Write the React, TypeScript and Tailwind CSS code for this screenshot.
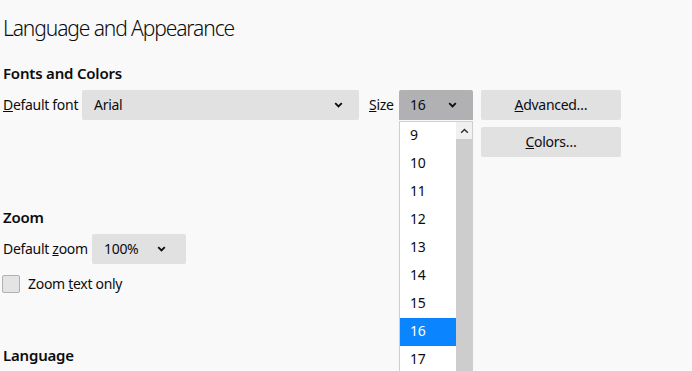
import React from "react";

const Chevron = () => (
  <svg width="9" height="6" viewBox="0 0 9 6">
    <path d="M1.2 1.2 L4.5 4.5 L7.8 1.2" stroke="#0c0c0d" strokeWidth="1.8" fill="none" />
  </svg>
);

const UpArrow = () => (
  <svg width="9" height="6" viewBox="0 0 9 6">
    <path d="M1.2 4.8 L4.5 1.5 L7.8 4.8" stroke="#333" strokeWidth="1.5" fill="none" />
  </svg>
);

export default function App() {
  const items = ["9", "10", "11", "12", "13", "14", "15", "16", "17"];
  return (
    <div
      className="w-[692px] h-[371px] bg-[#f9f9fa] overflow-hidden text-[#0c0c0d] text-[14px] tracking-[-0.3px] whitespace-nowrap"
      style={{ fontFamily: '"Noto Sans", "Open Sans", sans-serif' }}
    >
      <div className="pl-[3px] pt-[13px]">
        <h1 className="text-[21px] font-light leading-[30px] tracking-[-1.1px]">Language and Appearance</h1>
        <h2 className="mt-[20px] text-[15px] font-semibold leading-[20px] tracking-[-0.2px]">Fonts and Colors</h2>
        <div className="mt-[7px] flex items-start">
          <div className="w-[79px] h-[30px] flex items-center pb-[1px]">
            <span><span className="underline">D</span>efault font</span>
          </div>
          <div className="w-[277px] h-[30px] bg-[#e1e1e2] rounded-[2px] flex items-center justify-between pl-[12px] pr-[16px] pb-[1px]">
            <span>Arial</span>
            <Chevron />
          </div>
          <div className="w-[40px] h-[30px] flex items-center pl-[10px] pb-[1px]">
            <span><span className="underline">S</span>ize</span>
          </div>
          <div className="relative">
            <div className="w-[74px] h-[30px] bg-[#b1b1b3] rounded-t-[2px] flex items-center justify-between pl-[11px] pr-[16px] pb-[1px]">
              <span>16</span>
              <Chevron />
            </div>
            <div className="absolute top-[31px] left-0 w-[74px] h-[260px] bg-white border border-[#cfcfd0] flex">
              <div className="flex-1 flex flex-col">
                {items.map((it) => (
                  <div
                    key={it}
                    className={
                      "h-[28px] flex items-center pl-[10px] pb-[3px] " +
                      (it === "16" ? "bg-[#0a84ff] text-white" : "")
                    }
                  >
                    {it}
                  </div>
                ))}
              </div>
              <div className="w-[16px] flex flex-col bg-[#cdcdcd]">
                <div className="h-[17px] bg-[#f0f0f0] flex items-center justify-center">
                  <UpArrow />
                </div>
              </div>
            </div>
          </div>
          <div className="ml-[8px] flex flex-col gap-[7px]">
            <div className="w-[140px] h-[30px] bg-[#e1e1e2] rounded-[2px] flex items-center justify-center pb-[1px]">
              <span><span className="underline">A</span>dvanced…</span>
            </div>
            <div className="w-[140px] h-[30px] bg-[#e1e1e2] rounded-[2px] flex items-center justify-center pb-[1px]">
              <span><span className="underline">C</span>olors…</span>
            </div>
          </div>
        </div>
        <h2 className="mt-[50px] text-[15px] font-semibold leading-[20px] tracking-[-0.2px]">Zoom</h2>
        <div className="mt-[7px] flex items-center">
          <div className="w-[89px] h-[30px] flex items-center pb-[1px]">
            <span>Default <span className="underline">z</span>oom</span>
          </div>
          <div className="w-[94px] h-[30px] bg-[#e1e1e2] rounded-[2px] flex items-center justify-between pl-[12px] pr-[20px] pb-[1px]">
            <span>100%</span>
            <Chevron />
          </div>
        </div>
        <div className="mt-[10px] -ml-[1px] flex items-center h-[19px]">
          <div className="w-[18px] h-[18px] bg-[#e4e4e5] border border-[#b1b1b3] rounded-[2px]" />
          <span className="ml-[8px]">Zoom <span className="underline">t</span>ext only</span>
        </div>
        <h2 className="mt-[52px] text-[15px] font-semibold leading-[20px] tracking-[-0.2px]">Language</h2>
      </div>
    </div>
  );
}
